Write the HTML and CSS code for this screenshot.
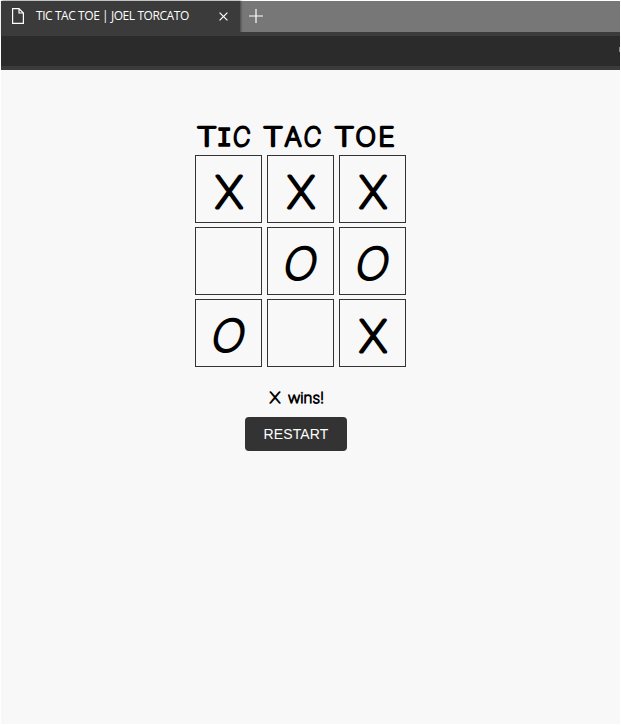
FILE: index.html
```html
<!DOCTYPE html>
<html lang="en">
<head>
<meta charset="utf-8">
<title>TIC TAC TOE | JOEL TORCATO</title>
<link rel="stylesheet" href="styles.css">
</head>
<body>
<div class="window">
  <header class="tabs">
    <div class="tab">
      <svg class="page-icon" width="12" height="16" viewBox="0 0 12 16"><path d="M.6.6H7L11.4 5V15.4H.6ZM7 .6V5H11.4"/></svg>
      <span class="tab-title">TIC TAC TOE | JOEL TORCATO</span>
      <svg class="close-icon" width="9" height="9" viewBox="0 0 9 9"><path d="M.6.6 8.4 8.4M8.4.6.6 8.4"/></svg>
    </div>
    <svg class="plus-icon" width="14" height="14" viewBox="0 0 14 14"><path d="M7 0V14M0 7H14"/></svg>
  </header>
  <div class="toolbar"><span class="tool"></span></div>
  <main class="game">
    <h1 class="heading"><svg class="ink title" width="212" height="34" viewBox="0 0 212 34">
      <text transform="translate(11.8 27) scale(1.28 1)">T</text><text class="mono" transform="translate(29.3 27) scale(.92 1)">I</text><text transform="translate(46.2 27) skewX(-4) scale(.92 1)">C</text>
      <text transform="translate(78 27) scale(1.28 1)">T</text><text transform="translate(98 27)">A</text><text transform="translate(117 27) skewX(-4) scale(.92 1)">C</text>
      <text transform="translate(149.2 27) scale(1.28 1)">T</text><text transform="translate(170.7 27) scale(1.05 1)">O</text><text transform="translate(191.5 27) scale(1.08 1)">E</text>
    </svg></h1>
    <div class="board">
      <div class="cell"><svg class="ink mark" viewBox="0 0 65 66"><text transform="translate(33 52) scale(1.04 1)">X</text></svg></div>
      <div class="cell"><svg class="ink mark" viewBox="0 0 65 66"><text transform="translate(33 52) scale(1.04 1)">X</text></svg></div>
      <div class="cell"><svg class="ink mark" viewBox="0 0 65 66"><text transform="translate(33 52) scale(1.04 1)">X</text></svg></div>
      <div class="cell"></div>
      <div class="cell"><svg class="ink mark" viewBox="0 0 65 66"><text class="nought" transform="translate(29.8 51.3) skewX(-12) scale(1.03 1)">O</text></svg></div>
      <div class="cell"><svg class="ink mark" viewBox="0 0 65 66"><text class="nought" transform="translate(29.8 51.3) skewX(-12) scale(1.03 1)">O</text></svg></div>
      <div class="cell"><svg class="ink mark" viewBox="0 0 65 66"><text class="nought" transform="translate(29.8 51.3) skewX(-12) scale(1.03 1)">O</text></svg></div>
      <div class="cell"></div>
      <div class="cell"><svg class="ink mark" viewBox="0 0 65 66"><text transform="translate(33 52) scale(1.04 1)">X</text></svg></div>
    </div>
    <div class="result">
      <svg class="ink status" width="60" height="22" viewBox="0 0 60 22"><text x="3.5" y="16.5" textLength="11" lengthAdjust="spacingAndGlyphs">X</text><text x="22" y="16.5" textLength="36" lengthAdjust="spacingAndGlyphs">wins!</text></svg>
      <button class="restart">RESTART</button>
    </div>
  </main>
</div>
</body>
</html>
```

FILE: styles.css
```css
* { box-sizing: border-box; }
body { margin: 0; background: #fff; }
.window {
  display: flex;
  flex-direction: column;
  height: 725px;
  border: 1px solid #fff;
}
svg { display: block; fill: none; flex: none; }
.tabs {
  display: flex;
  align-items: flex-start;
  height: 31px;
  background: #777;
  font-family: "Open Sans", "Noto Sans", sans-serif;
}
.tab {
  display: flex;
  width: 239px;
  height: 35px;
  padding: 7px 11px;
  background: #3b3b3b;
  box-shadow: 1px 0 2px #444;
}
.page-icon, .close-icon, .plus-icon { stroke: #fff; stroke-width: 1.2; }
.tab-title {
  width: 172px;
  margin-left: 12px;
  color: #fff;
  font-size: 12px;
  line-height: 16px;
  letter-spacing: -0.43px;
  white-space: nowrap;
}
.close-icon { margin: 4px 0 0 11px; }
.plus-icon { margin: 8px 0 0 9px; }
.toolbar {
  display: flex;
  justify-content: flex-end;
  align-items: center;
  height: 38px;
  background: #2b2b2b;
  border: solid #3b3b3b;
  border-width: 4px 0;
}
.tool { width: 1px; height: 5px; background: #888; margin-top: -4px; }
.game {
  flex: 1;
  padding: 49px 0 0 194px;
  background: #f8f8f8;
}
.heading { margin: 0; height: 36px; }
.ink {
  overflow: visible;
  font-family: Inter, Lato, sans-serif;
  font-weight: 100;
  fill: #000;
  stroke: #000;
  stroke-linejoin: round;
  stroke-linecap: round;
}
.title { font-size: 26px; stroke-width: 2.7px; text-anchor: middle; }
.mono { font-family: "Liberation Mono", monospace; font-weight: 400; font-size: 28px; stroke-width: 1.6px; }
.board {
  display: grid;
  grid-template-columns: repeat(3, 67px);
  grid-auto-rows: 68px;
  gap: 4px 5px;
}
.cell { border: 1px solid #333; }
.mark { width: 65px; height: 66px; font-size: 43px; stroke-width: 3.2px; text-anchor: middle; }
.nought { stroke-width: 3px; }
.result {
  display: flex;
  flex-direction: column;
  align-items: center;
  width: 202px;
  padding-top: 19px;
}
.status { font-size: 14.5px; stroke-width: 1.3px; }
.restart {
  width: 102px;
  height: 34px;
  margin-top: 9px;
  padding: 0;
  border: 0;
  border-radius: 4px;
  background: #333;
  color: #fff;
  font: 14px/34px "Liberation Sans", Arial, sans-serif;
  letter-spacing: .15px;
}
```
